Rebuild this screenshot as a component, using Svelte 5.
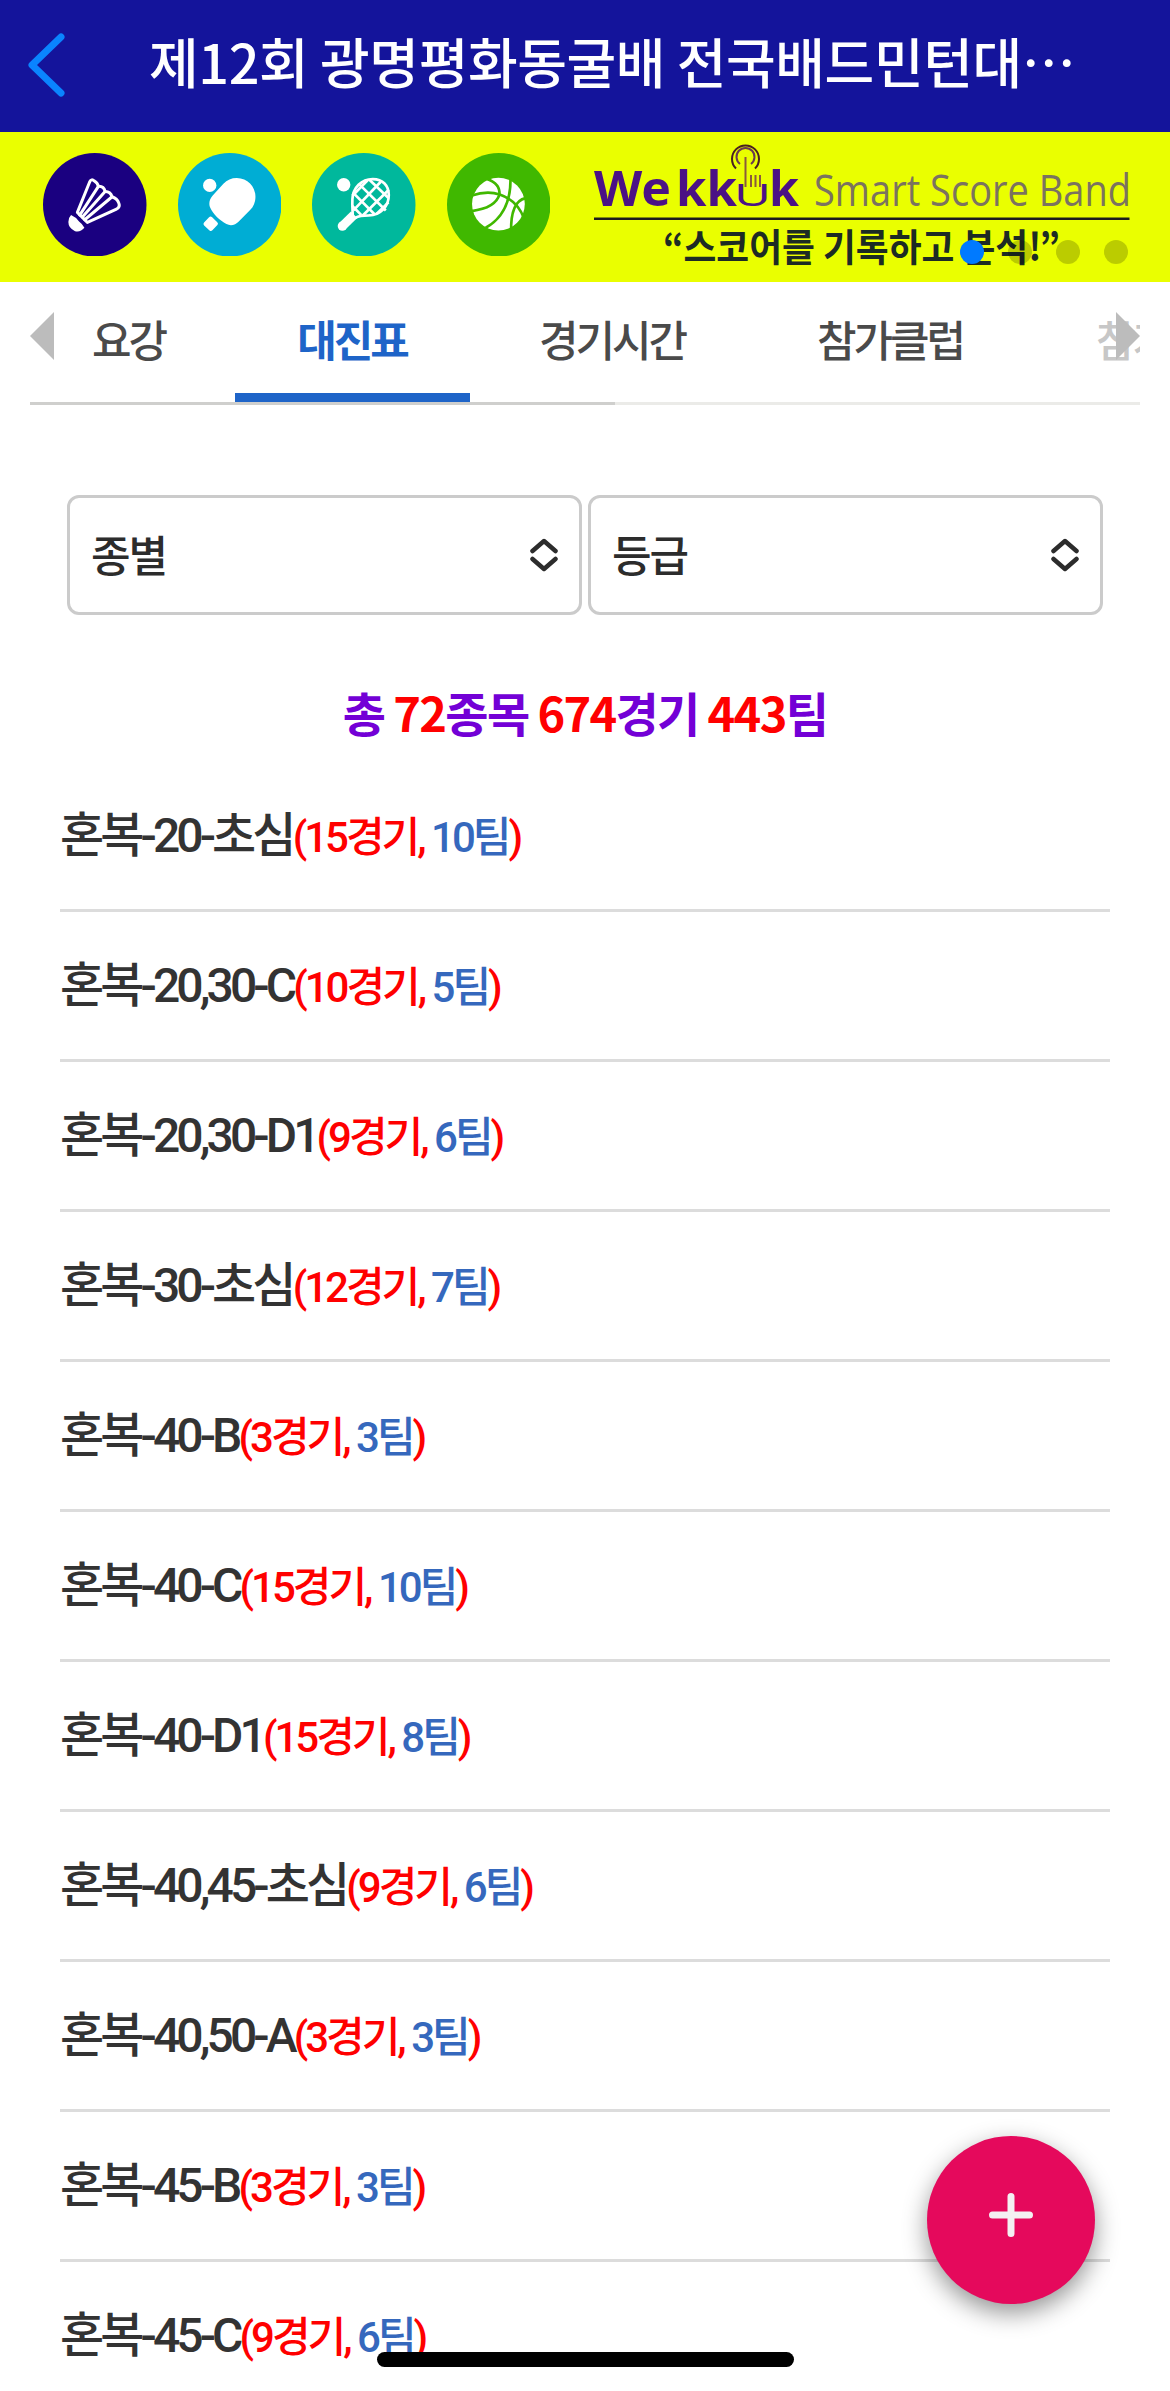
<script>
let active = '대진표';

const tabs = ['요강', '대진표', '경기시간', '참가클럽', '참가팀'];
const filters = ['종별', '등급'];

const events = [
  { name: '혼복-20-초심', games: 15, teams: 10 },
  { name: '혼복-20,30-C', games: 10, teams: 5 },
  { name: '혼복-20,30-D1', games: 9, teams: 6 },
  { name: '혼복-30-초심', games: 12, teams: 7 },
  { name: '혼복-40-B', games: 3, teams: 3 },
  { name: '혼복-40-C', games: 15, teams: 10 },
  { name: '혼복-40-D1', games: 15, teams: 8 },
  { name: '혼복-40,45-초심', games: 9, teams: 6 },
  { name: '혼복-40,50-A', games: 3, teams: 3 },
  { name: '혼복-45-B', games: 3, teams: 3 },
  { name: '혼복-45-C', games: 9, teams: 6 }
];
</script>

<div class="screen">
  <header>
    <button class="back" aria-label="뒤로">
      <svg width="40" height="68" viewBox="0 0 40 68">
        <path d="M36 6 L7 34 L36 62" />
      </svg>
    </button>
    <h1>제12회 광명평화동굴배 전국배드민턴대⋯</h1>
  </header>

  <div class="banner">
    <div class="sports">
      <svg class="sport" viewBox="0 0 310 310">
        <circle cx="155" cy="155" r="155" fill="#1a0080" />
        <g fill="none" stroke="#fff" stroke-width="9" stroke-linejoin="round" stroke-linecap="round">
          <path d="M103 178 L140 86 Q145 76 154 84 Q164 90 166 100 Q182 99 186 115 Q202 115 207 131 Q222 136 227 150 Q232 163 220 168 L133 208 Z" />
          <path d="M110 186 L166 100 M118 192 L186 115 M125 200 L207 131" />
        </g>
        <path d="M84 186 Q98 192 108 205 Q118 212 124 224 Q112 238 96 234 Q76 226 76 207 Q76 194 84 186Z" fill="#fff" />
      </svg>
      <svg class="sport" viewBox="0 0 310 310">
        <circle cx="155" cy="155" r="155" fill="#00add4" />
        <g fill="#fff">
          <circle cx="95" cy="97" r="20" />
          <path d="M176 75 C208 75 232 100 232 131 C232 148 226 161 216 171 L182 205 C172 216 158 219 145 213 C125 202 105 183 97 165 C91 152 94 138 104 127 L136 92 C147 81 160 75 176 75Z" />
          <rect x="81" y="195" width="34" height="34" rx="6" transform="rotate(43 98 212)" />
        </g>
      </svg>
      <svg class="sport" viewBox="0 0 310 310">
        <circle cx="155" cy="155" r="155" fill="#00b89c" />
        <circle cx="95" cy="95" r="20" fill="#fff" />
        <g fill="none" stroke="#fff" stroke-width="8">
          <path d="M122 188 C122 176 120 160 121 138 C123 104 148 78 182 78 C212 78 230 98 230 126 C230 160 206 186 170 187 C152 187 140 188 130 194" />
          <path d="M142 94 L221 172 M122 118 L188 184 M120 158 L148 186 M172 80 L229 135" />
          <path d="M206 86 L124 172 M230 110 L152 187 M168 80 L121 128 M229 148 L194 182" />
        </g>
        <path d="M90 220 L126 185" stroke="#fff" stroke-width="27" />
        <circle cx="91" cy="219" r="14" fill="#fff" />
      </svg>
      <svg class="sport" viewBox="0 0 310 310">
        <circle cx="155" cy="155" r="155" fill="#40b800" />
        <circle cx="154" cy="153" r="79" fill="#fff" />
        <g fill="none" stroke="#40b800" stroke-width="8">
          <path d="M74 127 Q120 112 158 124 Q210 142 231 196" />
          <path d="M120 78 Q160 92 157 125 Q145 165 74 174" />
          <path d="M190 70 Q194 180 116 224" />
          <path d="M235 135 Q190 145 192 236" />
        </g>
      </svg>
    </div>

    <svg class="slogan" width="580" height="150" viewBox="580 132 580 150">
      <g class="brand">
        <text x="594" y="206" textLength="77" lengthAdjust="spacingAndGlyphs">We</text>
        <text x="676" y="206" textLength="61" lengthAdjust="spacingAndGlyphs">kk</text>
        <text x="734" y="206" class="thin" textLength="37" lengthAdjust="spacingAndGlyphs">U</text>
        <text x="769" y="206" textLength="30" lengthAdjust="spacingAndGlyphs">k</text>
      </g>
      <g fill="none" stroke="#8a5a3c" stroke-width="2">
        <path d="M745.500 187 V157 M751 187 V175 M755.500 187 V175 M760 187 V175" />
        <path d="M740 164 A9 9 0 1 1 751 164" stroke="#6b3a50" />
        <path d="M736 168.500 A13.500 13.500 0 1 1 755 168.500" stroke="#4a2020" />
      </g>
      <text class="tagline" x="814" y="206" textLength="317" lengthAdjust="spacingAndGlyphs">Smart Score Band</text>
      <rect x="594" y="217.500" width="535.500" height="2.500" fill="#1c1c1c" />
      <text class="quote" x="663" y="261" textLength="397" lengthAdjust="spacingAndGlyphs">“스코어를 기록하고 분석!”</text>
    </svg>

    <div class="dots">
      <span class="on"></span><span></span><span></span><span></span>
    </div>
  </div>

  <nav>
    {#each tabs as tab}
      <button class="tab" class:active={active === tab} on:click={() => (active = tab)}>{tab}</button>
    {/each}
    <svg class="arrow left" width="24" height="48" viewBox="0 0 24 48"><path d="M24 0 V48 L0 24Z" /></svg>
    <svg class="arrow right" width="24" height="48" viewBox="0 0 24 48"><path d="M0 0 V48 L24 24Z" /></svg>
  </nav>

  <div class="filters">
    {#each filters as filter}
      <button class="select">
        <span>{filter}</span>
        <svg width="28" height="34" viewBox="0 0 28 34">
          <path d="M2.500 13 L14 3 L25.500 13 M2.500 21 L14 31 L25.500 21" />
        </svg>
      </button>
    {/each}
  </div>

  <p class="total">총 <b>72</b>종목 <b>674</b>경기 <b>443</b>팀</p>

  <ul>
    {#each events as event}
      <li>
        {event.name}<span class="count">({event.games}경기, <em>{event.teams}팀</em>)</span>
      </li>
    {/each}
  </ul>

  <button class="fab" aria-label="추가">
    <svg width="46" height="46" viewBox="0 0 46 46"><path d="M23 4.500 V41.500 M4.500 23 H41.500" /></svg>
  </button>
  <div class="home-bar"></div>
</div>

<style>
.screen {
  position: relative;
  height: 2391px;
  overflow: hidden;
  background: #fff;
  color: #333;
  font-family: 'Noto Sans CJK KR', sans-serif;
}
button {
  border: none;
  background: none;
  padding: 0;
  font-family: inherit;
  color: inherit;
}
header {
  display: flex;
  align-items: center;
  height: 132px;
  background: #14149b;
}
.back {
  display: flex;
  margin: 0 0 3px 25px;
}
.back path {
  fill: none;
  stroke: #0a84ff;
  stroke-width: 7;
  stroke-linecap: round;
  stroke-linejoin: round;
}
h1 {
  margin: 0 0 10px 84px;
  color: #fff;
  font-size: 54px;
  font-weight: 500;
  line-height: 80px;
  letter-spacing: -0.400px;
  white-space: nowrap;
}
.banner {
  position: relative;
  display: flex;
  align-items: center;
  height: 150px;
  background: #eaff00;
}
.sports {
  display: flex;
  gap: 31px;
  width: 537px;
  margin: 0 0 5px 43px;
}
.sport {
  width: 103.500px;
  height: 103.500px;
}
.brand {
  font: 700 48px 'Noto Sans', sans-serif;
  fill: #4b1285;
}
.brand .thin {
  font-size: 30px;
  font-weight: 400;
}
.tagline {
  font: 400 43px 'Open Sans', sans-serif;
  fill: #7b735f;
}
.quote {
  font-size: 38px;
  font-weight: 700;
  fill: #1d2b24;
}
.dots {
  position: absolute;
  right: 42px;
  bottom: 18px;
  display: flex;
  gap: 24px;
}
.dots span {
  width: 24px;
  height: 24px;
  border-radius: 50%;
  background: rgba(0, 0, 0, 0.2);
}
.dots .on {
  background: #007aff;
}
nav {
  position: relative;
  display: grid;
  grid-template-columns: 205px 235px 288px 265px 117px;
  height: 123px;
  margin: 0 30px;
  overflow: hidden;
  background: linear-gradient(90deg, #cfcfcd 585px, #ebebe8 585px) bottom / 100% 3px no-repeat;
}
.tab {
  height: 120px;
  padding: 0 4px 8px 0;
  color: #4a4a4a;
  font-size: 43px;
  font-weight: 500;
  letter-spacing: -3px;
  white-space: nowrap;
}
.tab:first-child {
  padding-right: 8px;
}
.tab.active {
  padding: 0 1px 0 0;
  border-bottom: 9px solid #1e64c8;
  color: #1e64c8;
  font-weight: 700;
}
.tab:nth-child(4) {
  padding-right: 1px;
}
.tab:nth-child(5) {
  padding-left: 73px;
  text-align: left;
  opacity: 0.3;
}
.arrow {
  position: absolute;
  top: 30px;
  fill: #bcbcbc;
}
.arrow.left {
  left: 0;
}
.arrow.right {
  right: 0;
}
.filters {
  display: flex;
  gap: 6px;
  margin: 90px 67px 0;
}
.select {
  flex: 1;
  display: flex;
  align-items: center;
  justify-content: space-between;
  height: 120px;
  padding: 0 21px;
  border: 3px solid #cbcbcb;
  border-radius: 12px;
  color: #2c2c2c;
  font-size: 43px;
  font-weight: 500;
  letter-spacing: -2px;
}
.select span {
  padding-bottom: 4px;
}
.select path {
  fill: none;
  stroke: #2c2c2c;
  stroke-width: 4.500;
  stroke-linecap: round;
  stroke-linejoin: round;
}
.total {
  height: 70px;
  margin: 62px 0 15px;
  color: #7300d6;
  font-size: 47px;
  font-weight: 700;
  line-height: 70px;
  letter-spacing: -1.700px;
  text-align: center;
}
.total b {
  color: #f00;
  font-weight: 700;
}
ul {
  margin: 0 60px;
  padding: 0;
  list-style: none;
}
li {
  height: 147px;
  border-bottom: 3px solid #dcdcdc;
  font-family: Roboto, 'Noto Sans CJK KR', sans-serif;
  font-size: 48px;
  font-weight: 500;
  line-height: 147px;
  letter-spacing: -3.900px;
  white-space: nowrap;
}
.count {
  color: #f00;
  font-size: 42px;
  letter-spacing: -3px;
}
.count em {
  color: #3568bd;
  font-style: normal;
}
.fab {
  position: absolute;
  left: 927px;
  top: 2136px;
  display: flex;
  align-items: center;
  justify-content: center;
  width: 168px;
  height: 168px;
  padding-bottom: 11px;
  border-radius: 50%;
  background: #e5095c;
  box-shadow: 0 9px 24px rgba(0, 0, 0, 0.42);
}
.fab path {
  stroke: #f4f0f2;
  stroke-width: 7;
  stroke-linecap: round;
}
.home-bar {
  position: absolute;
  left: 377px;
  bottom: 24px;
  width: 417px;
  height: 15px;
  border-radius: 8px;
  background: #000;
}
</style>
